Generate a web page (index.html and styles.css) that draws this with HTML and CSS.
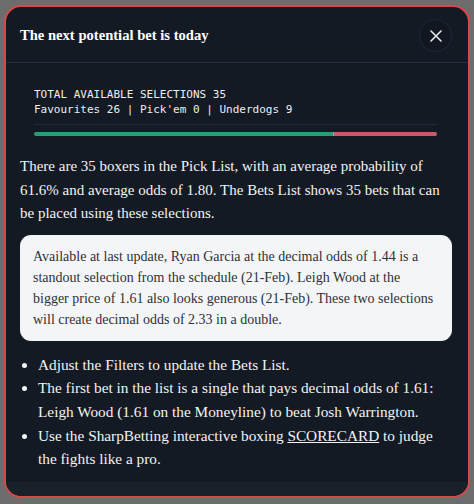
FILE: index.html
```html
<!DOCTYPE html>
<html lang="en">
<head>
    <meta charset="UTF-8">
    <link rel="stylesheet" href="styles.css">
</head>
<body>

    <div class="overlay">
        <div class="modal">
            <div class="modal-head">
                <h2 class="modal-title">The next potential bet is today</h2>
                <button type="button" class="close-btn" aria-label="Close">
                    <svg width="12" height="12" viewBox="0 0 12 12">
                        <path d="M1 1 L11 11 M11 1 L1 11" stroke="#e6e8ec" stroke-width="1.6" stroke-linecap="round" fill="none"/>
                    </svg>
                </button>
            </div>

            <div class="modal-body">
                <div class="stats">
                    <div class="monospace">TOTAL AVAILABLE SELECTIONS 35</div>
                    <div class="monospace">Favourites 26 | Pick'em 0 | Underdogs 9</div>
                    <div class="divider"></div>
                    <div class="split-bar">
                        <span class="fav" style="width: 74.3%"></span>
                        <span class="dog"></span>
                    </div>
                </div>

                <p class="summary">There are 35 boxers in the Pick List, with an average probability of 61.6% and average odds of 1.80. The Bets List shows 35 bets that can be placed using these selections.</p>

                <div class="callout">Available at last update, Ryan Garcia at the decimal odds of 1.44 is a standout selection from the schedule (21-Feb). Leigh Wood at the bigger price of 1.61 also looks generous (21-Feb). These two selections will create decimal odds of 2.33 in a double.</div>

                <ul class="tips">
                    <li>Adjust the Filters to update the Bets List.</li>
                    <li>The first bet in the list is a single that pays decimal odds of 1.61: Leigh Wood (1.61 on the Moneyline) to beat Josh Warrington.</li>
                    <li>Use the SharpBetting interactive boxing <a href="#">SCORECARD</a> to judge the fights like a pro.</li>
                </ul>
            </div>

            <div class="modal-foot"></div>
        </div>
    </div>

</body>
</html>
```

FILE: styles.css
```css
        body {
            margin: 0;
            background-color: #6d6d6d;
            font-family: "Liberation Serif", "Times New Roman", serif;
        }

        .overlay {
            padding: 5px 4px 6px 4px;
        }

        .modal {
            height: 493px;
            box-sizing: border-box;
            border: 2px solid #d9474b;
            border-radius: 17px;
            background-color: #141a24;
            color: #f2f2f2;
            display: flex;
            flex-direction: column;
            overflow: hidden;
        }

        .modal-head {
            height: 55px;
            display: flex;
            align-items: center;
            justify-content: space-between;
            padding: 0 16px 0 14px;
            border-bottom: 1px solid #262e3d;
            flex-shrink: 0;
        }

        .modal-title {
            font-size: 14.6px;
            font-weight: bold;
            margin: 1px 0 0 0;
            color: #ffffff;
        }

        .close-btn {
            width: 33px;
            height: 33px;
            border-radius: 50%;
            border: 1px solid #222938;
            background-color: #111620;
            display: flex;
            align-items: center;
            justify-content: center;
            padding: 0;
            margin-top: 2px;
        }

        .modal-body {
            flex: 1;
            padding: 10px 16px 0 14px;
        }

        .stats {
            padding: 14px 15px 0 14px;
        }

        .monospace {
            font-family: "DejaVu Sans Mono", monospace;
            font-size: 11px;
            line-height: 15px;
            color: #eceef1;
        }

        .divider {
            border-bottom: 1px solid #232b38;
            margin-top: 7px;
        }

        .split-bar {
            display: flex;
            height: 4px;
            margin-top: 7px;
            border-radius: 2px;
            overflow: hidden;
        }

        .fav {
            background-color: #2a9d78;
        }

        .dog {
            flex: 1;
            background-color: #c95a68;
            border-left: 1px solid #9aa0a8;
        }

        .summary {
            font-size: 15px;
            line-height: 23.6px;
            margin: 19px 0 0 0;
        }

        .callout {
            margin-top: 9px;
            background-color: #f4f5f7;
            color: #2e3138;
            border-radius: 11px;
            padding: 11px 15px 11px 13px;
            font-size: 14px;
            line-height: 21px;
        }

        .tips {
            margin: 12px 0 0 0;
            padding-left: 18px;
            font-size: 15.3px;
            line-height: 23.6px;
        }

        .tips a {
            color: #f2f2f2;
        }

        .modal-foot {
            height: 14px;
            background-color: #19202a;
            flex-shrink: 0;
        }
```
